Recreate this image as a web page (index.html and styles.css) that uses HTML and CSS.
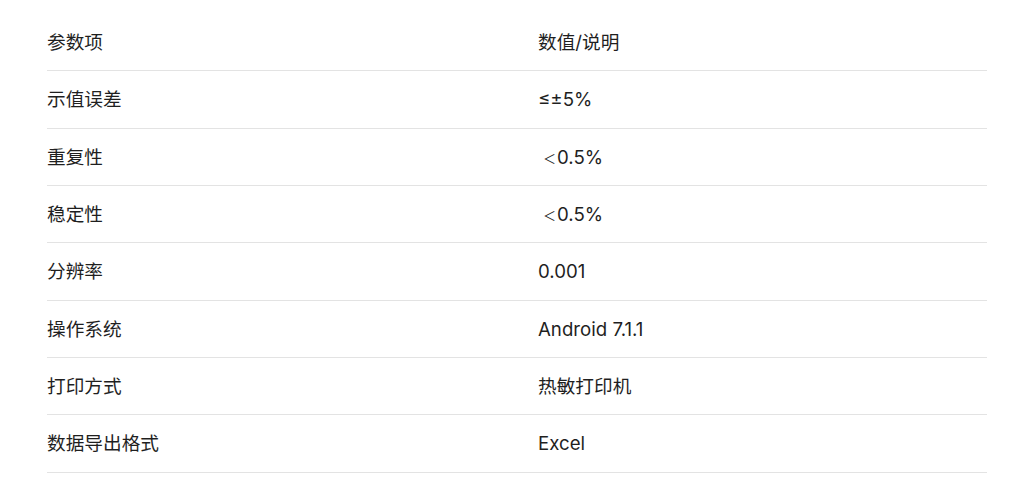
FILE: index.html
```html
<!DOCTYPE html>
<html lang="zh-CN">
<head>
<meta charset="utf-8">
<link rel="stylesheet" href="styles.css">
</head>
<body>
<div class="table">
  <div class="row"><div class="c1">参数项</div><div class="c2">数值/说明</div></div>
  <div class="row"><div class="c1">示值误差</div><div class="c2">≤±5%</div></div>
  <div class="row"><div class="c1">重复性</div><div class="c2"><span class="lt">＜</span>0.5%</div></div>
  <div class="row"><div class="c1">稳定性</div><div class="c2"><span class="lt">＜</span>0.5%</div></div>
  <div class="row"><div class="c1">分辨率</div><div class="c2">0.001</div></div>
  <div class="row"><div class="c1">操作系统</div><div class="c2">Android 7.1.1</div></div>
  <div class="row"><div class="c1">打印方式</div><div class="c2">热敏打印机</div></div>
  <div class="row"><div class="c1">数据导出格式</div><div class="c2">Excel</div></div>
</div>
</body>
</html>
```

FILE: styles.css
```css
html, body {
  margin: 0;
  padding: 0;
  background: #ffffff;
}
body {
  font-family: Inter, "Noto Sans CJK SC", sans-serif;
  font-size: 18.67px;
  color: #1f1f1f;
}
.table {
  margin: 14px 0 0 47px;
  width: 940px;
  display: flex;
  flex-direction: column;
}
.row {
  display: grid;
  grid-template-columns: 491px 1fr;
  align-items: center;
  height: 56.33px;
  border-bottom: 1px solid #e3e3e3;
}
.c1, .c2 {
  line-height: 24px;
  padding-top: 2px;
}
.lt {
  display: inline-block;
  width: 18px;
  text-align: right;
  padding-right: 1px;
  font-size: 13px;
  vertical-align: 1px;
}
```
